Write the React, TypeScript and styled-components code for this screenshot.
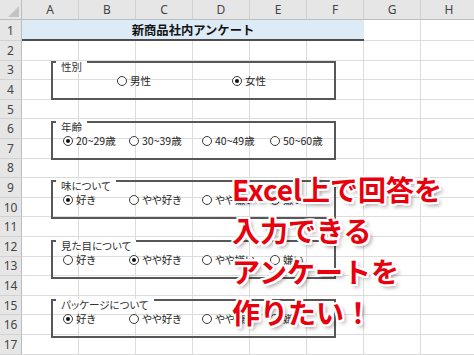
import React from 'react';
import styled, { createGlobalStyle } from 'styled-components';

const COLS = ['A', 'B', 'C', 'D', 'E', 'F', 'G', 'H'];
const BODY_ROWS = 16; // rows 2..17

type Group = {
  title: string;
  indent: number;
  cols: string;
  options: string[];
  checked: number;
};

const LIKES = ['好き', 'やや好き', 'やや嫌い', '嫌い'];
const FOUR = '66px 73px 68px auto';

const groups: Group[] = [
  { title: '性別', indent: 64, cols: '115px auto', options: ['男性', '女性'], checked: 1 },
  { title: '年齢', indent: 10, cols: FOUR, options: ['20~29歳', '30~39歳', '40~49歳', '50~60歳'], checked: 0 },
  { title: '味について', indent: 10, cols: FOUR, options: LIKES, checked: 0 },
  { title: '見た目について', indent: 10, cols: FOUR, options: LIKES, checked: 1 },
  { title: 'パッケージについて', indent: 10, cols: FOUR, options: LIKES, checked: 0 },
];

const callout = ['Excel上で回答を', '入力できる', 'アンケートを', '作りたい！'];

const App: React.FC = () => {
  return (
    <>
      <GlobalStyle />
      <Window>
        <Sheet>
          <Corner />
          {COLS.map((c) => (
            <ColHead key={c}>{c}</ColHead>
          ))}

          <RowHead>1</RowHead>
          <TitleCell>新商品社内アンケート</TitleCell>
          <Cell />
          <Cell />

          {Array.from({ length: BODY_ROWS }).map((_, r) => (
            <React.Fragment key={r}>
              <RowHead>{r + 2}</RowHead>
              {COLS.map((c) => (
                <Cell key={c} />
              ))}
            </React.Fragment>
          ))}
        </Sheet>

        <FormLayer>
          {groups.map((g) => (
            <GroupBox key={g.title} $cols={g.cols} $indent={g.indent}>
              <Caption>{g.title}</Caption>
              {g.options.map((opt, i) => (
                <Option key={opt}>
                  <Radio $checked={i === g.checked} />
                  {opt}
                </Option>
              ))}
            </GroupBox>
          ))}
        </FormLayer>

        <Callout>
          {callout.map((line) => (
            <CalloutLine key={line}>{line}</CalloutLine>
          ))}
        </Callout>
      </Window>
    </>
  );
};

const GlobalStyle = createGlobalStyle`
  html, body {
    margin: 0;
    padding: 0;
    background: #ffffff;
  }
  body {
    font-family: "Noto Sans CJK JP", "Noto Sans", sans-serif;
    overflow: hidden;
  }
`;

const Window = styled.div`
  position: relative;
  width: 474px;
  height: 355px;
  overflow: hidden;
  background: #ffffff;
`;

const Sheet = styled.div`
  display: grid;
  grid-template-columns: 22px repeat(8, 57px);
  grid-template-rows: 20px 21px repeat(${BODY_ROWS}, 19.6px);
`;

const Corner = styled.div`
  position: relative;
  background: #e6e6e6;
  border-right: 1px solid #bdbdbd;
  border-bottom: 1px solid #bdbdbd;
  box-sizing: border-box;

  &::after {
    content: '';
    position: absolute;
    right: 2px;
    bottom: 2px;
    width: 0;
    height: 0;
    border-left: 11px solid transparent;
    border-bottom: 11px solid #c4c4c4;
  }
`;

const ColHead = styled.div`
  display: flex;
  align-items: center;
  justify-content: center;
  background: #e6e6e6;
  border-right: 1px solid #cfcfcf;
  border-bottom: 1px solid #bdbdbd;
  box-sizing: border-box;
  color: #444444;
  font-family: "Noto Sans", sans-serif;
  font-size: 12px;
`;

const RowHead = styled.div`
  display: flex;
  align-items: center;
  justify-content: center;
  background: #e6e6e6;
  border-right: 1px solid #bdbdbd;
  border-bottom: 1px solid #d2d2d2;
  box-sizing: border-box;
  color: #444444;
  font-family: "Noto Sans", sans-serif;
  font-size: 12px;
`;

const Cell = styled.div`
  border-right: 1px solid #dcdcdc;
  border-bottom: 1px solid #dcdcdc;
  box-sizing: border-box;
`;

const TitleCell = styled.div`
  grid-column: span 6;
  display: flex;
  align-items: center;
  justify-content: center;
  background: #ddebf7;
  border-bottom: 2px solid #4d4d4d;
  box-sizing: border-box;
  color: #141414;
  font-size: 12.3px;
  font-weight: 700;
`;

const FormLayer = styled.div`
  position: absolute;
  top: 61px;
  left: 51px;
  width: 285px;
  display: flex;
  flex-direction: column;
  gap: 20.5px;
`;

const GroupBox = styled.div<{ $cols: string; $indent: number }>`
  position: relative;
  height: 39px;
  box-sizing: border-box;
  border: 2px solid #575757;
  display: grid;
  grid-template-columns: ${(p) => p.$cols};
  align-items: center;
  padding-left: ${(p) => p.$indent}px;
  padding-top: 1px;
`;

const Caption = styled.span`
  position: absolute;
  top: -2px;
  left: 3px;
  padding: 0 5px;
  background: #ffffff;
  color: #333333;
  font-size: 10.5px;
  line-height: 12px;
  font-feature-settings: "palt";
  white-space: nowrap;
`;

const Option = styled.label`
  display: flex;
  align-items: center;
  gap: 3px;
  color: #262626;
  font-size: 10.5px;
  line-height: 12px;
  font-feature-settings: "palt";
  white-space: nowrap;
`;

const Radio = styled.span<{ $checked: boolean }>`
  position: relative;
  flex: none;
  width: 10px;
  height: 10px;
  box-sizing: border-box;
  border: 1px solid #3a3a3a;
  border-radius: 50%;
  background: #ffffff;

  &::after {
    content: '';
    display: ${(p) => (p.$checked ? 'block' : 'none')};
    position: absolute;
    left: 2px;
    top: 2px;
    width: 4px;
    height: 4px;
    border-radius: 50%;
    background: #111111;
  }
`;

const Callout = styled.div`
  position: absolute;
  left: 232px;
  top: 169px;
  display: flex;
  flex-direction: column;
`;

const CalloutLine = styled.div`
  color: #e8000d;
  font-size: 28px;
  font-weight: 700;
  line-height: 41px;
  white-space: nowrap;
  text-shadow:
    2px 0 0 #fff, -2px 0 0 #fff, 0 2px 0 #fff, 0 -2px 0 #fff,
    2px 2px 0 #fff, -2px -2px 0 #fff, 2px -2px 0 #fff, -2px 2px 0 #fff,
    3px 3px 4px rgba(0, 0, 0, 0.45);
`;

export default App;
